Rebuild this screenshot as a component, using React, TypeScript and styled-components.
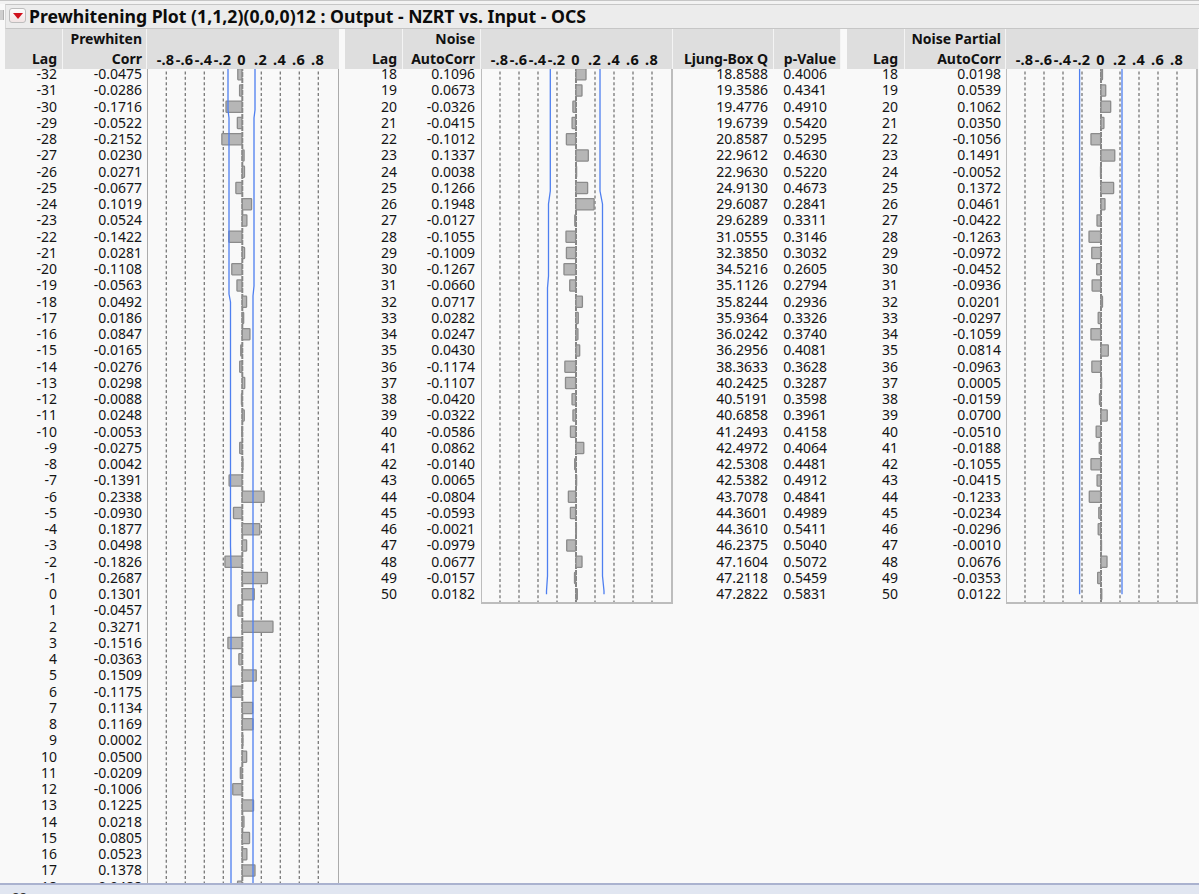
import React from "react";
import styled, { createGlobalStyle } from "styled-components";

const ROW = 16.25;
const SCALE = 95;
const OFFSET = 3;
const FONT = `"Noto Sans", "Open Sans", sans-serif`;

const GlobalStyle = createGlobalStyle`
  html, body { margin: 0; padding: 0; height: 100%; overflow: hidden; background: #f9f9f9; }
  #root { height: 100%; }
`;

const Page = styled.div`
  height: 894px;
  display: flex;
  flex-direction: column;
  background: #f9f9f9;
  color: #111;
  font-family: ${FONT};
  border-top: 1px solid #c6c6c6;
  box-sizing: border-box;
  overflow: hidden;
`;
const TopGap = styled.div`
  height: 3px;
  flex: none;
  background: #f3f3f3;
`;
const TitleRow = styled.div`
  flex: none;
  display: flex;
  align-items: stretch;
  height: 25px;
`;
const Handle = styled.div`
  width: 3px;
  height: 10px;
  margin: 6px 1px 0 0;
  background: #cfcfcf;
  border-right: 1px solid #b0b0b0;
`;
const TitleBar = styled.div`
  flex: 1;
  display: flex;
  align-items: center;
  gap: 3px;
  padding: 0 0 2px 3px;
  background: #ececec;
  border-top: 1px solid #c6c6c6;
  border-bottom: 1px solid #c6c6c6;
  border-left: 1px solid #d8d8d8;
  box-sizing: border-box;
`;
const Disclosure = styled.button`
  width: 17px;
  height: 15px;
  padding: 0;
  flex: none;
  display: flex;
  align-items: center;
  justify-content: center;
  border: 1px solid #bdbdbd;
  border-radius: 3px;
  background: linear-gradient(#fdfdfd, #f1e4e4);
`;
const Title = styled.div`
  font-size: 17.65px;
  font-weight: 700;
  white-space: nowrap;
  color: #0c0c0c;
`;
const Report = styled.div`
  flex: 1;
  min-height: 0;
  display: flex;
  padding-left: 5px;
  overflow: hidden;
`;
const TableGrid = styled.div<{ $cols: string; $gap: number }>`
  display: grid;
  grid-template-columns: ${(p) => p.$cols};
  margin-right: ${(p) => p.$gap}px;
  height: 100%;
  flex: none;
`;
const Column = styled.div`
  display: flex;
  flex-direction: column;
  min-height: 0;
  height: 100%;
`;
const Head = styled.div<{ $pad: number }>`
  flex: none;
  height: 40px;
  box-sizing: border-box;
  background: #dedede;
  border-right: 1px solid #f4f4f4;
  padding-right: ${(p) => p.$pad - 1}px;
  text-align: right;
  font-size: 14px;
  font-weight: 700;
  line-height: 20px;
  white-space: nowrap;
  display: flex;
  flex-direction: column;
  justify-content: flex-end;
`;
const AxisHead = styled.div<{ $end?: boolean }>`
  flex: none;
  height: 40px;
  box-sizing: border-box;
  background: #dedede;
  border-right: ${(p) => (p.$end ? "1px solid #f4f4f4" : "none")};
  display: flex;
  align-items: flex-end;
  padding-left: 9px;
`;
const AxisLabel = styled.span`
  width: 19px;
  flex: none;
  display: flex;
  justify-content: center;
  font-size: 14.5px;
  font-weight: 700;
  line-height: 20px;
  white-space: nowrap;
  letter-spacing: 0.2px;
`;
const Body = styled.div`
  flex: 1;
  min-height: 0;
  overflow: hidden;
`;
const Stack = styled.div`
  margin-top: -${OFFSET}px;
`;
const Cell = styled.div<{ $pad: number }>`
  height: ${ROW}px;
  line-height: ${ROW}px;
  padding-right: ${(p) => p.$pad}px;
  text-align: right;
  font-size: 14px;
  white-space: nowrap;
  color: #141414;
`;
const PlotBody = styled.div`
  flex: 1;
  min-height: 0;
  overflow: hidden;
  align-self: stretch;
`;
const PlotFrame = styled.div<{ $boxed?: boolean }>`
  box-sizing: border-box;
  width: 100%;
  margin-top: -${OFFSET}px;
  border-left: 1px solid ${(p) => (p.$boxed ? "#bdbdbd" : "#ababab")};
  border-right: ${(p) => (p.$boxed ? "2px solid #bdbdbd" : "1px solid #ababab")};
  border-bottom: ${(p) => (p.$boxed ? "2px solid #bdbdbd" : "none")};
  line-height: 0;
`;
const StatusBar = styled.div`
  flex: none;
  height: 11px;
  background: #e1e6f1;
  border-top: 2px solid #aab2cf;
  box-sizing: border-box;
  padding: 5px 0 0 12px;
  font-size: 13px;
  line-height: 14px;
  color: #333;
  overflow: hidden;
`;

const parseRows = (start: number, s: string) => s.trim().split(/\s+/).map((v, i) => ({ lag: start + i, v }));

const t1 = parseRows(-32, `-0.0475 -0.0286 -0.1716 -0.0522 -0.2152 0.0230 0.0271 -0.0677 0.1019 0.0524 -0.1422 0.0281 -0.1108 -0.0563 0.0492 0.0186 0.0847 -0.0165 -0.0276 0.0298 -0.0088 0.0248 -0.0053 -0.0275 0.0042 -0.1391 0.2338 -0.0930 0.1877 0.0498 -0.1826 0.2687 0.1301 -0.0457 0.3271 -0.1516 -0.0363 0.1509 -0.1175 0.1134 0.1169 0.0002 0.0500 -0.0209 -0.1006 0.1225 0.0218 0.0805 0.0523 0.1378 0.0488`);
const t2 = parseRows(18, `0.1096 0.0673 -0.0326 -0.0415 -0.1012 0.1337 0.0038 0.1266 0.1948 -0.0127 -0.1055 -0.1009 -0.1267 -0.0660 0.0717 0.0282 0.0247 0.0430 -0.1174 -0.1107 -0.0420 -0.0322 -0.0586 0.0862 -0.0140 0.0065 -0.0804 -0.0593 -0.0021 -0.0979 0.0677 -0.0157 0.0182`);
const q = `18.8588 19.3586 19.4776 19.6739 20.8587 22.9612 22.9630 24.9130 29.6087 29.6289 31.0555 32.3850 34.5216 35.1126 35.8244 35.9364 36.0242 36.2956 38.3633 40.2425 40.5191 40.6858 41.2493 42.4972 42.5308 42.5382 43.7078 44.3601 44.3610 46.2375 47.1604 47.2118 47.2822`.split(" ");
const pv = `0.4006 0.4341 0.4910 0.5420 0.5295 0.4630 0.5220 0.4673 0.2841 0.3311 0.3146 0.3032 0.2605 0.2794 0.2936 0.3326 0.3740 0.4081 0.3628 0.3287 0.3598 0.3961 0.4158 0.4064 0.4481 0.4912 0.4841 0.4989 0.5411 0.5040 0.5072 0.5459 0.5831`.split(" ");
const t3 = parseRows(18, `0.0198 0.0539 0.1062 0.0350 -0.1056 0.1491 -0.0052 0.1372 0.0461 -0.0422 -0.1263 -0.0972 -0.0452 -0.0936 0.0201 -0.0297 -0.1059 0.0814 -0.0963 0.0005 -0.0159 0.0700 -0.0510 -0.0188 -0.1055 -0.0415 -0.1233 -0.0234 -0.0296 -0.0010 0.0676 -0.0353 0.0122`);

const ticks = [-0.8, -0.6, -0.4, -0.2, 0.2, 0.4, 0.6, 0.8];
const labels = ["-.8", "-.6", "-.4", "-.2", "0", ".2", ".4", ".6", ".8"];

type PlotProps = {
  values: number[];
  zero: number;
  width: number;
  height: number;
  left: string;
  right: string;
};

function Plot({ values, zero, width, height, left, right }: PlotProps) {
  return (
    <svg width={width} height={height} viewBox={`0 0 ${width} ${height}`} style={{ display: "block" }}>
      {ticks.map((t) => (
        <line
          key={t}
          x1={zero + t * SCALE}
          x2={zero + t * SCALE}
          y1={0}
          y2={height}
          stroke="#787878"
          strokeWidth={1.3}
          strokeDasharray="3 2.4"
        />
      ))}
      <line x1={zero} x2={zero} y1={0} y2={height} stroke="#858585" strokeWidth={2} strokeDasharray="5 1" />
      {values.map((v, i) => {
        const w = Math.abs(v) * SCALE;
        const x = v < 0 ? zero - w : zero;
        const cy = i * ROW + ROW / 2;
        return (
          <rect
            key={i}
            x={x}
            y={cy - 5.5}
            width={Math.max(w - 0.4, 0.6)}
            height={11.2}
            fill="#b6b6b6"
            stroke="#8b8b8b"
            strokeWidth={1.3}
            rx={0.5}
          />
        );
      })}
      <path d={left} fill="none" stroke="#4e7ff0" strokeWidth={1.3} />
      <path d={right} fill="none" stroke="#4e7ff0" strokeWidth={1.3} />
    </svg>
  );
}

const Values = ({ items, pad }: { items: (string | number)[]; pad: number }) => (
  <Body>
    <Stack>
      {items.map((x, i) => (
        <Cell key={i} $pad={pad}>
          {x}
        </Cell>
      ))}
    </Stack>
  </Body>
);

const Axis = ({ end }: { end?: boolean }) => (
  <AxisHead $end={end}>
    {labels.map((l) => (
      <AxisLabel key={l}>{l}</AxisLabel>
    ))}
  </AxisHead>
);

export default function App() {
  const h1 = t1.length * ROW;
  const h2 = t2.length * ROW;
  const y0 = OFFSET;
  return (
    <>
      <GlobalStyle />
      <Page>
        <TopGap />
        <TitleRow>
          <Handle />
          <TitleBar>
            <Disclosure aria-label="menu">
              <svg width="10" height="6" viewBox="0 0 10 6">
                <path d="M0 0 H10 L5 6 Z" fill="#d0101c" />
              </svg>
            </Disclosure>
            <Title>Prewhitening Plot (1,1,2)(0,0,0)12 : Output - NZRT vs. Input - OCS</Title>
          </TitleBar>
        </TitleRow>
        <Report>
          <TableGrid $cols="58px 84px 192px" $gap={6}>
            <Column>
              <Head $pad={6}>Lag</Head>
              <Values items={t1.map((r) => r.lag)} pad={6} />
            </Column>
            <Column>
              <Head $pad={5}>
                <div>Prewhiten</div>
                <div>Corr</div>
              </Head>
              <Values items={t1.map((r) => r.v)} pad={5} />
            </Column>
            <Column>
              <Axis />
              <PlotBody>
                <PlotFrame>
                  <Plot
                    values={t1.map((r) => Number(r.v)).map((v, i) => (i === 50 ? -0.05 : v))}
                    zero={94.3}
                    width={190}
                    height={h1}
                    left={`M80 ${y0} V44 L81 52 V228 L82.5 236 V480 L83 500 V${h1}`}
                    right={`M107 ${y0} V44 L106 52 V220 L105 230 V${h1}`}
                  />
                </PlotFrame>
              </PlotBody>
            </Column>
          </TableGrid>
          <TableGrid $cols="58px 78px 192px 101px 67px" $gap={6}>
            <Column>
              <Head $pad={6}>Lag</Head>
              <Values items={t2.map((r) => r.lag)} pad={6} />
            </Column>
            <Column>
              <Head $pad={6}>
                <div>Noise</div>
                <div>AutoCorr</div>
              </Head>
              <Values items={t2.map((r) => r.v)} pad={6} />
            </Column>
            <Column>
              <Axis end />
              <PlotBody>
                <PlotFrame $boxed>
                  <Plot
                    values={t2.map((r) => Number(r.v))}
                    zero={94}
                    width={189}
                    height={h2}
                    left={`M68.3 ${y0} V125 L66.5 138 V210 L65.5 222 V510 L64.5 525 V${h2 - 8}`}
                    right={`M118 ${y0} V125 L120.5 138 V510 L122 525 V${h2 - 8}`}
                  />
                </PlotFrame>
              </PlotBody>
            </Column>
            <Column>
              <Head $pad={6}>Ljung-Box Q</Head>
              <Values items={q} pad={6} />
            </Column>
            <Column>
              <Head $pad={5}>p-Value</Head>
              <Values items={pv} pad={14} />
            </Column>
          </TableGrid>
          <TableGrid $cols="58px 101px 192px" $gap={0}>
            <Column>
              <Head $pad={7}>Lag</Head>
              <Values items={t3.map((r) => r.lag)} pad={7} />
            </Column>
            <Column>
              <Head $pad={5}>
                <div>Noise Partial</div>
                <div>AutoCorr</div>
              </Head>
              <Values items={t3.map((r) => r.v)} pad={5} />
            </Column>
            <Column>
              <Axis />
              <PlotBody>
                <PlotFrame $boxed>
                  <Plot
                    values={t3.map((r) => Number(r.v))}
                    zero={94}
                    width={189}
                    height={h2}
                    left={`M72.6 ${y0} V${h2 - 8}`}
                    right={`M115 ${y0} V${h2 - 8}`}
                  />
                </PlotFrame>
              </PlotBody>
            </Column>
          </TableGrid>
        </Report>
        <StatusBar>88</StatusBar>
      </Page>
    </>
  );
}
